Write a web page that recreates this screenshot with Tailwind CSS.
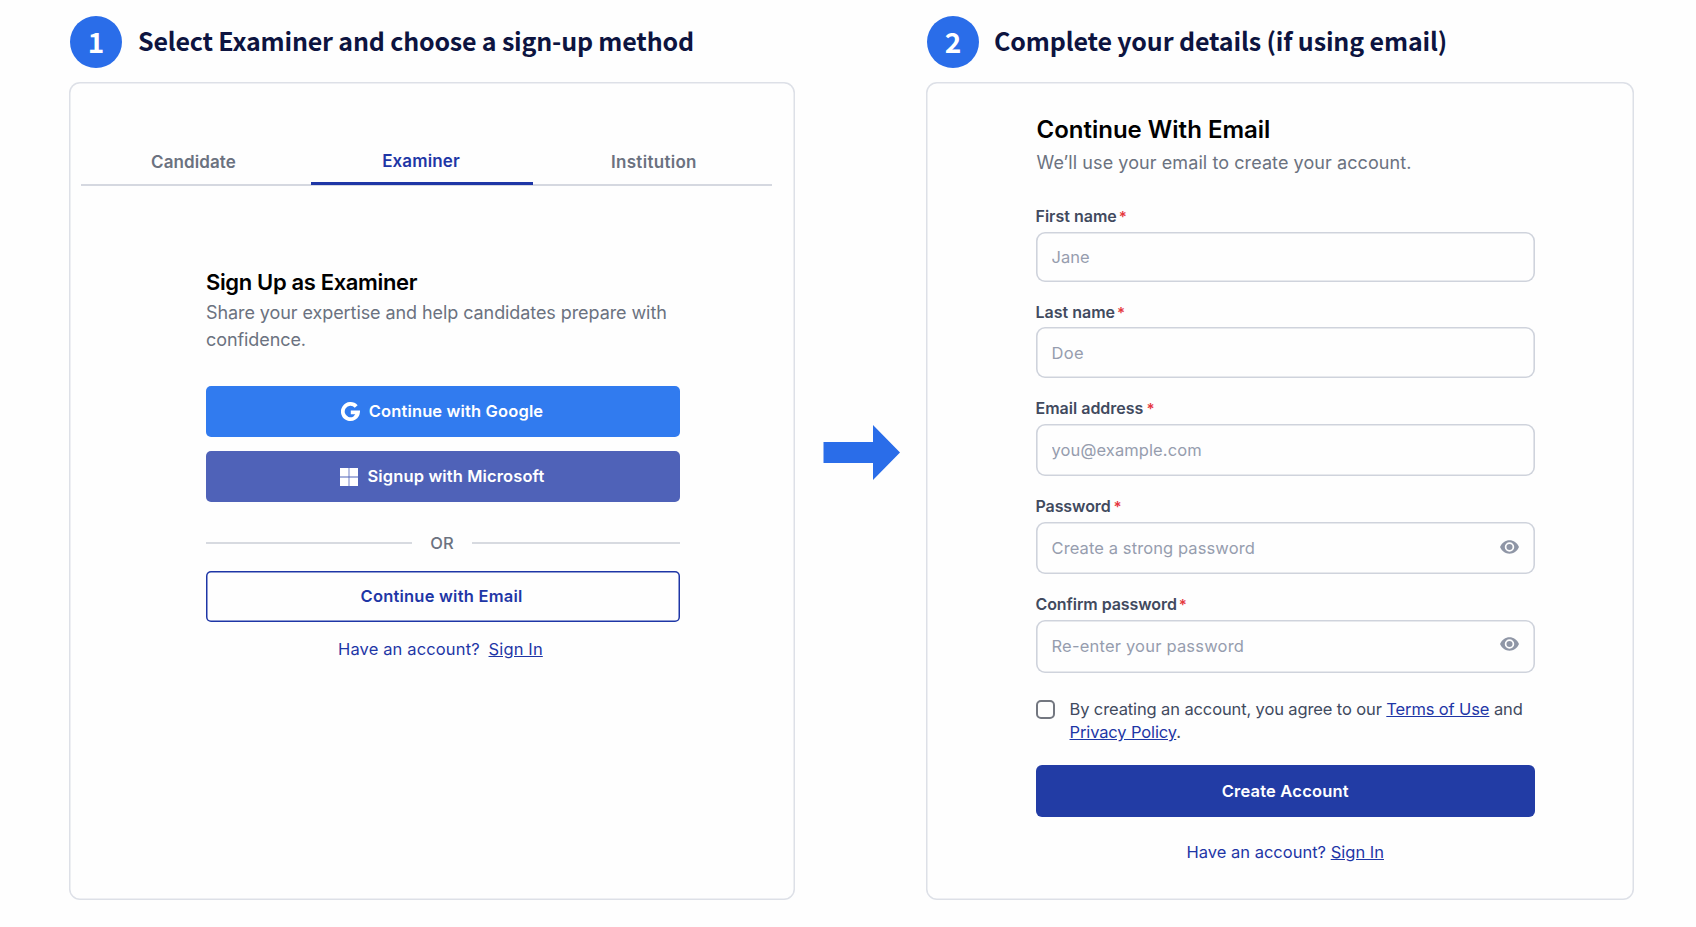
<!DOCTYPE html>
<html lang="en">
    <head>
        <meta charset="UTF-8">
        <meta name="viewport" content="width=device-width, initial-scale=1.0">
        <title>Examiner Sign Up Guide</title>
        <script src="https://cdn.jsdelivr.net/npm/@tailwindcss/browser@4"></script>
    </head>

    <body class="flex items-start w-[1696px] h-[927px] pl-[69px] pt-4 overflow-hidden bg-[#fefefe] font-['Inter',sans-serif]">

        <!-- Step 1 -->
        <section class="w-[726px] shrink-0">
            <div class="flex items-center h-[52px] pl-px mb-[14px]">
                <span class="flex items-center justify-center size-[52px] pb-[3px] rounded-full bg-[#2a6de9] text-white text-[28px] font-bold font-['Noto_Sans_CJK_SC',sans-serif]">1</span>
                <h1 class="ml-[16px] pb-[3px] text-[25px] font-bold tracking-[-0.18px] text-[#0d1440] whitespace-nowrap font-['Noto_Sans_CJK_SC',sans-serif]">Select Examiner and choose a sign-up method</h1>
            </div>

            <div class="h-[818px] shadow-[inset_0_0_0_1.5px_#dde0e7] rounded-[11px] pl-[12px] pt-[60px]">
                <div class="flex w-[691px] h-[44px] border-b-2 border-[#d5d8e0] text-[17px] font-semibold text-[#6b7280]">
                    <button class="w-[230px] pl-[70px] text-left tracking-[0.1px]">Candidate</button>
                    <button class="w-[222px] h-[43px] pr-[2px] border-b-[3px] border-[#1e36a6] text-[#1e36a6] tracking-[0.12px]">Examiner</button>
                    <button class="w-[239px] pl-[78px] text-left tracking-[0.3px]">Institution</button>
                </div>

                <div class="w-[474px] ml-[125px] mt-[82px]">
                    <h2 class="text-[22px] leading-[28px] font-semibold tracking-[-0.35px] text-black">Sign Up as Examiner</h2>
                    <p class="mt-[4px] text-[18px] leading-[26.5px] tracking-[-0.08px] text-[#6b7280]">Share your expertise and help candidates prepare with confidence.</p>

                    <button class="flex items-center justify-center w-full h-[51px] mt-[33px] pr-[2px] rounded-[5px] bg-[#317bef] text-white text-[16.5px] font-semibold tracking-[0.14px]">
                        <svg class="w-[19px] h-[20px] mr-[9px]" viewBox="0 0 19 20" fill="none" stroke="currentColor" stroke-width="3.8">
                            <path d="M15.2 4.6A7.6 7.6 0 1 0 17 10.3H9.8"/>
                        </svg>
                        Continue with Google
                    </button>
                    <button class="flex items-center justify-center w-full h-[51px] mt-[14px] pr-[2px] rounded-[5px] bg-[#4f62b8] text-white text-[16.5px] font-semibold tracking-[0.12px]">
                        <svg class="size-[18px] mr-[10px]" viewBox="0 0 18 18" fill="currentColor">
                            <path d="M0 0h8.6v8.6H0zM9.4 0H18v8.6H9.4zM0 9.4h8.6V18H0zM9.4 9.4H18V18H9.4z"/>
                        </svg>
                        Signup with Microsoft
                    </button>

                    <div class="flex items-center h-[20px] mt-[31px]">
                        <span class="w-[206px] h-[2px] bg-[#d7dae0]"></span>
                        <span class="w-[60px] text-center text-[16.5px] font-medium text-[#6b7280]">OR</span>
                        <span class="w-[208px] h-[2px] bg-[#d7dae0]"></span>
                    </div>

                    <button class="block w-full h-[51px] mt-[18px] pr-[3px] rounded-[5px] shadow-[inset_0_0_0_1.5px_#1e36a6] text-[#1e36a6] text-[16.5px] font-semibold tracking-[0.22px]">Continue with Email</button>
                    <p class="pl-[132px] mt-[15px] text-[16.5px] leading-[24px] tracking-[0.14px] text-[#1e36a6]">Have an account? <a class="ml-1 underline" href="#">Sign In</a></p>
                </div>
            </div>
        </section>

        <!-- Arrow between the steps -->
        <svg class="shrink-0 w-[77px] h-[56px] ml-[28px] mt-[409px]" viewBox="0 0 77 56" fill="#2a6de9">
            <path d="M.5 17H50V0l27 27.5L50 55V38H.5z"/>
        </svg>

        <!-- Step 2 -->
        <section class="w-[708px] shrink-0 ml-[26px]">
            <div class="flex items-center h-[52px] pl-px mb-[14px]">
                <span class="flex items-center justify-center size-[52px] pb-[3px] rounded-full bg-[#2a6de9] text-white text-[28px] font-bold font-['Noto_Sans_CJK_SC',sans-serif]">2</span>
                <h1 class="ml-[15px] pb-[3px] text-[25px] font-bold tracking-[-0.14px] text-[#0d1440] whitespace-nowrap font-['Noto_Sans_CJK_SC',sans-serif]">Complete your details (if using email)</h1>
            </div>

            <div class="h-[818px] shadow-[inset_0_0_0_1.5px_#dde0e7] rounded-[11px] pl-[109.5px] pt-[32px]">
                <form class="w-[499.5px]">
                    <h2 class="pl-px text-[24px] leading-[32px] font-semibold text-black">Continue With Email</h2>
                    <p class="pl-px mt-[4px] text-[18px] leading-[26px] tracking-[0.08px] text-[#6b7280]">We’ll use your email to create your account.</p>

                    <label class="block mt-[30px] h-[26px] text-[16px] leading-[20px] font-semibold text-[#414a5e]" for="first">First name<span class="ml-[2px] text-[15px] text-[#e5383f]">*</span></label>
                    <input id="first" type="text" placeholder="Jane" class="block w-full h-[50px] px-[16px] rounded-[9px] shadow-[inset_0_0_0_1.6px_#cfd3dc] text-[16.5px] placeholder:text-[#969dae]">

                    <label class="block mt-[20px] h-[25px] text-[16px] leading-[20px] font-semibold text-[#414a5e]" for="last">Last name<span class="ml-[2px] text-[15px] text-[#e5383f]">*</span></label>
                    <input id="last" type="text" placeholder="Doe" class="block w-full h-[51px] px-[16px] rounded-[9px] shadow-[inset_0_0_0_1.6px_#cfd3dc] text-[16.5px] tracking-[0.3px] placeholder:text-[#969dae]">

                    <label class="block mt-[20px] h-[26px] text-[16px] leading-[20px] font-semibold text-[#414a5e]" for="email">Email address<span class="ml-[3px] text-[15px] text-[#e5383f]">*</span></label>
                    <input id="email" type="text" placeholder="you@example.com" class="block w-full h-[52px] px-[16px] rounded-[9px] shadow-[inset_0_0_0_1.6px_#cfd3dc] text-[16.5px] tracking-[0.1px] placeholder:text-[#969dae]">

                    <label class="block mt-[20px] h-[26px] text-[16px] leading-[20px] font-semibold tracking-[-0.1px] text-[#414a5e]" for="password">Password<span class="ml-[3px] text-[15px] text-[#e5383f]">*</span></label>
                    <div class="flex items-center h-[52px] px-[16px] rounded-[9px] shadow-[inset_0_0_0_1.6px_#cfd3dc]">
                        <input id="password" type="password" placeholder="Create a strong password" class="grow text-[16.5px] tracking-[0.1px] placeholder:text-[#969dae]">
                        <svg class="w-[19px] h-[14px] mb-[3px]" viewBox="0 0 19 14" fill="none">
                            <path d="M0 7C2 2.600 5.500.3 9.500.3S17 2.600 19 7c-2 4.400-5.500 6.700-9.500 6.700S2 11.400 0 7z" fill="#8f96a6"/>
                            <circle cx="9.500" cy="7" r="3.900" fill="#8f96a6" stroke="#fff" stroke-width="1.700"/>
                        </svg>
                    </div>

                    <label class="block mt-[20px] h-[26px] text-[16px] leading-[20px] font-semibold tracking-[-0.08px] text-[#414a5e]" for="confirm">Confirm password<span class="ml-[2px] text-[15px] text-[#e5383f]">*</span></label>
                    <div class="flex items-center h-[53px] px-[16px] rounded-[9px] shadow-[inset_0_0_0_1.6px_#cfd3dc]">
                        <input id="confirm" type="password" placeholder="Re-enter your password" class="grow text-[16.5px] tracking-[0.2px] placeholder:text-[#969dae]">
                        <svg class="w-[19px] h-[14px] mb-[5px]" viewBox="0 0 19 14" fill="none">
                            <path d="M0 7C2 2.600 5.500.3 9.500.3S17 2.600 19 7c-2 4.400-5.500 6.700-9.500 6.700S2 11.400 0 7z" fill="#8f96a6"/>
                            <circle cx="9.500" cy="7" r="3.900" fill="#8f96a6" stroke="#fff" stroke-width="1.700"/>
                        </svg>
                    </div>

                    <div class="flex items-start mt-[25px]">
                        <input type="checkbox" class="appearance-none shrink-0 size-[19px] mt-[2px] border-2 border-[#737780] rounded-[5px]">
                        <p class="ml-[15px] text-[16.5px] leading-[23px] tracking-[-0.12px] text-[#414a5e] whitespace-nowrap">By creating an account, you agree to our <a class="underline text-[#1e36a6]" href="#">Terms of Use</a> and<br><a class="underline text-[#1e36a6]" href="#">Privacy Policy</a>.</p>
                    </div>

                    <button class="block w-full h-[52px] mt-[21px] rounded-[6px] bg-[#223ca5] text-white text-[16.5px] font-semibold tracking-[0.2px]">Create Account</button>
                    <p class="mt-[23px] text-[16.5px] leading-[24px] text-center text-[#1e36a6]">Have an account? <a class="underline" href="#">Sign In</a></p>
                </form>
            </div>
        </section>

    </body>
</html>
